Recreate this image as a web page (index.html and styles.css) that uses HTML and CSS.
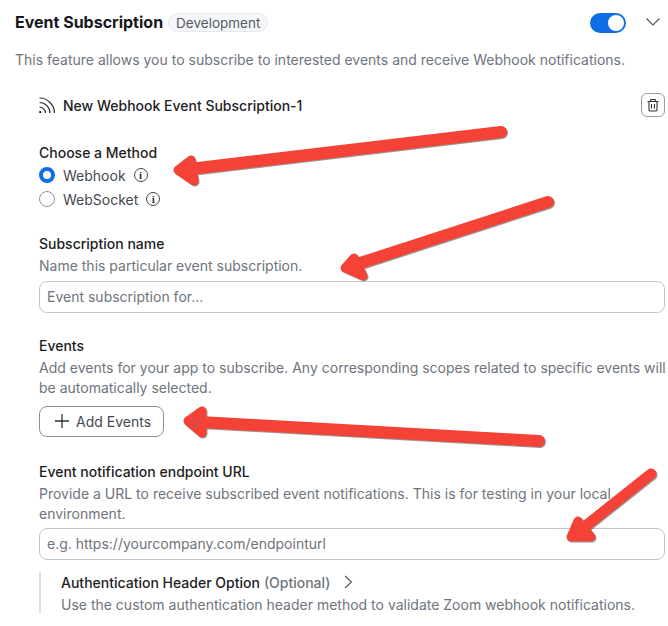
FILE: index.html
```html
<!DOCTYPE html>
<html lang="en">
<head>
    <meta charset="UTF-8">
    <title>Event Subscription</title>
    <link rel="stylesheet" href="styles.css">
</head>
<body>
    <div class="page">
        <div class="header">
            <h2>Event Subscription</h2>
            <span class="badge">Development</span>
            <span class="toggle"><span class="knob"></span></span>
            <svg class="chevron" width="16" height="10" viewBox="0 0 16 10"><path d="M1.5 1.5 8 8l6.500-6.500" fill="none" stroke="#555" stroke-width="1.100"/></svg>
        </div>
        <p class="intro">This feature allows you to subscribe to interested events and receive Webhook notifications.</p>

        <div class="subscription">
            <div class="sub-title">
                <svg width="16" height="16" viewBox="0 0 16 16" fill="none" stroke="#333" stroke-width="1.200">
                    <path d="M.5 1c8 0 15 7 15 15"/>
                    <path d="M.5 5.500c5.600 0 10.500 4.900 10.500 10.500"/>
                    <path d="M.5 10c3.200 0 6 2.800 6 6"/>
                    <circle cx="1.200" cy="15" r="1.100" fill="#111" stroke="none"/>
                </svg>
                <span class="sub-name">New Webhook Event Subscription-1</span>
                <button class="trash" type="button">
                    <svg width="14" height="14" viewBox="0 0 14 14" fill="none" stroke="#333" stroke-width="1.100">
                        <path d="M1.500 3.500h11M4.800 3.500V1.500h4.400v2M3 3.500v8.200c0 .8.500 1.300 1.300 1.300h5.400c.8 0 1.300-.5 1.300-1.300V3.500M5.500 6v4.500M8.500 6v4.500"/>
                    </svg>
                </button>
            </div>

            <div class="field method">
                <div class="label">Choose a Method</div>
                <div class="radio-row"><span class="radio on"></span>Webhook <span class="info">i</span></div>
                <div class="radio-row"><span class="radio"></span>WebSocket <span class="info">i</span></div>
            </div>

            <div class="field name-field">
                <div class="label">Subscription name</div>
                <div class="help">Name this particular event subscription.</div>
                <div class="input">Event subscription for...</div>
            </div>

            <div class="field events-field">
                <div class="label">Events</div>
                <div class="help">Add events for your app to subscribe. Any corresponding scopes related to specific events will be automatically selected.</div>
                <button class="add-btn" type="button">
                    <svg width="14" height="14" viewBox="0 0 14 14"><path d="M7 0v14M0 7h14" stroke="#333" stroke-width="1.300"/></svg>
                    Add Events
                </button>
            </div>

            <div class="field url-field">
                <div class="label">Event notification endpoint URL</div>
                <div class="help">Provide a URL to receive subscribed event notifications. This is for testing in your local environment.</div>
                <div class="input">e.g. https://yourcompany.com/endpointurl</div>
            </div>

            <div class="auth">
                <div class="auth-title">
                    <span class="label">Authentication Header Option</span>
                    <span class="optional">(Optional)</span>
                    <svg width="10" height="14" viewBox="0 0 10 14"><path d="M2 1l6.500 6L2 13" fill="none" stroke="#555" stroke-width="1.100"/></svg>
                </div>
                <div class="help">Use the custom authentication header method to validate Zoom webhook notifications.</div>
            </div>
        </div>
    </div>

    <!-- red annotation arrows -->
    <svg class="arrows" width="668" height="626" viewBox="0 0 668 626">
        <g fill="#f44336" stroke="#f44336" stroke-linejoin="round" stroke-linecap="round">
            <path d="M501 132 190 169" stroke-width="12" fill="none"/>
            <path d="M178 170 191 160 194 181Z" stroke-width="9"/>
            <path d="M548 202 354 265" stroke-width="12" fill="none"/>
            <path d="M345 268 354 258 363 276Z" stroke-width="9"/>
            <path d="M539 441 200 422" stroke-width="12" fill="none"/>
            <path d="M188 421 202 411 202 433Z" stroke-width="9"/>
            <path d="M651 474 578 532" stroke-width="11" fill="none"/>
            <path d="M571 537 578 521 591 537Z" stroke-width="9"/>
        </g>
        <path class="cursor-mark" d="M193 419a4 4 0 0 1 0 8" fill="none" stroke="#8a6a66" stroke-width="1"/>
    </svg>
</body>
</html>
```

FILE: styles.css
```css
body {
    font-family: 'Inter', 'Liberation Sans', sans-serif;
    font-size: 14px;
    color: #222;
    background: #fff;
    margin: 0;
    height: 626px;
    overflow: hidden;
    position: relative;
}

.page {
    padding: 10px 3px 0 15px;
}

.header {
    display: flex;
    align-items: center;
    height: 24px;
}

h2 {
    font-size: 16px;
    font-weight: 700;
    margin: 0;
    color: #16181c;
}

.badge {
    margin-left: 5px;
    padding: 0 7px;
    height: 19px;
    line-height: 18px;
    font-size: 13.500px;
    color: #555b63;
    background: #f5f6f9;
    border: 1px solid #e6e8ee;
    border-radius: 10px;
    box-sizing: border-box;
}

.toggle {
    margin-left: auto;
    margin-top: 2px;
    width: 36px;
    height: 20px;
    border-radius: 10px;
    background: #0e6ee8;
    position: relative;
}

.knob {
    position: absolute;
    right: 2px;
    top: 2px;
    width: 16px;
    height: 16px;
    border-radius: 50%;
    background: #fff;
}

.chevron {
    margin-left: 19px;
    margin-right: 4px;
}

.intro {
    margin: 15px 0 0;
    line-height: 21px;
    color: #6e747c;
}

.subscription {
    margin-left: 24px;
}

.sub-title {
    display: flex;
    align-items: center;
    margin-top: 23px;
    height: 24px;
}

.sub-name {
    margin-left: 8px;
    color: #222;
    font-weight: 500;
}

.trash {
    margin-left: auto;
    width: 24px;
    height: 24px;
    padding: 0;
    display: flex;
    align-items: center;
    justify-content: center;
    background: #fff;
    border: 1px solid #9a9da3;
    border-radius: 6px;
}

.label {
    line-height: 21px;
    color: #1c1e22;
    font-weight: 500;
}

.field .label {
    margin-bottom: 2px;
}

.help {
    line-height: 20.500px;
    color: #6e747c;
    margin-right: -3px;
}

.method {
    margin-top: 25px;
}

.method .label {
    margin-bottom: 0;
}

.radio-row {
    display: flex;
    align-items: center;
    height: 24px;
    color: #444950;
}

.radio {
    width: 16px;
    height: 16px;
    margin-right: 8px;
    border: 1px solid #8e9297;
    border-radius: 50%;
    box-sizing: border-box;
    background: #fff;
}

.radio.on {
    border: 4.500px solid #0e6ee8;
}

.info {
    margin-left: 8px;
    width: 14px;
    height: 14px;
    line-height: 12px;
    text-align: center;
    font-size: 11px;
    font-weight: 700;
    font-family: 'Liberation Serif', serif;
    border: 1px solid #444;
    border-radius: 50%;
    box-sizing: border-box;
    color: #333;
}

.name-field {
    margin-top: 22px;
}

.input {
    margin-top: 4px;
    height: 32px;
    line-height: 30px;
    padding-left: 7px;
    color: #6e747c;
    border: 1px solid #c4c6ca;
    border-radius: 8px;
    box-sizing: border-box;
}

.events-field {
    margin-top: 22px;
}

.add-btn {
    display: flex;
    align-items: center;
    gap: 7px;
    margin-top: 7px;
    width: 125px;
    height: 31px;
    padding: 0 0 0 15px;
    font-family: inherit;
    font-size: 14px;
    color: #444950;
    background: #fff;
    border: 1px solid #8e9297;
    border-radius: 8px;
    box-sizing: border-box;
}

.url-field {
    margin-top: 24px;
}

.url-field .input {
    margin-top: 3px;
}

.auth {
    margin-top: 12px;
    padding-left: 20px;
    border-left: 2px solid #dcdee2;
    height: 41px;
}

.auth-title {
    display: flex;
    align-items: center;
    gap: 4px;
}

.optional {
    color: #6e747c;
    font-weight: 500;
}

.auth-title svg {
    margin-left: 9px;
}

.auth .help {
    margin-top: 2px;
}

/* sits over the form */
.arrows {
    position: absolute;
    left: 0;
    top: 0;
    filter: drop-shadow(1px 1px 0.5px rgba(70, 70, 70, 0.55));
}
```
